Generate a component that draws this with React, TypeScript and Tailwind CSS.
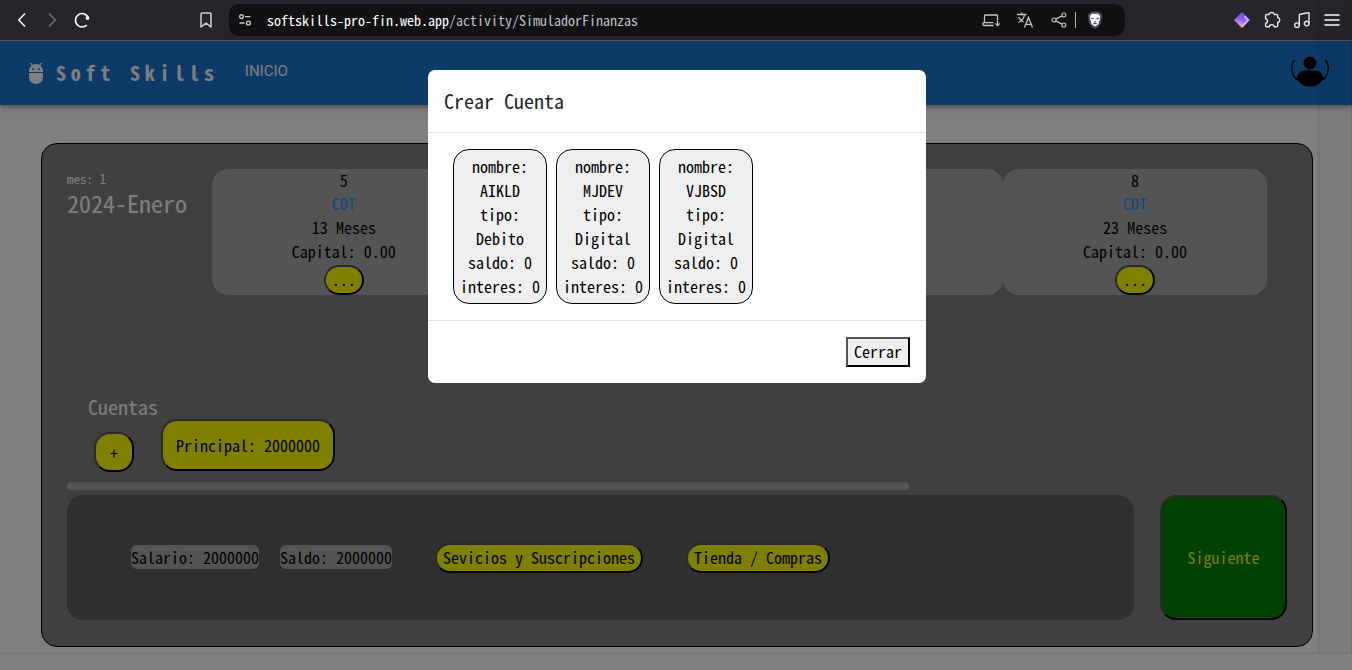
import { useState, type ReactNode } from "react";

const mono = "font-['Noto_Sans_Mono_CJK_SC','Liberation_Mono',monospace]";

function BrowserBar() {
  return (
    <header className="flex h-[41px] shrink-0 items-center border-b border-[#5a5a5c] bg-[#26262a] text-[#dcdce0]">
      <div className="flex w-[229px] items-center pl-3">
        <button type="button" aria-label="Atrás" className="w-[30px]">
          <svg width="20" height="20" viewBox="0 0 20 20" fill="none" stroke="#ffffff" strokeWidth="1.5">
            <path d="M13 3.500 6.800 10 13 16.500" />
          </svg>
        </button>
        <button type="button" aria-label="Adelante" className="w-[30px]">
          <svg width="20" height="20" viewBox="0 0 20 20" fill="none" stroke="#707074" strokeWidth="1.5">
            <path d="M7 3.500 13.200 10 7 16.500" />
          </svg>
        </button>
        <button type="button" aria-label="Recargar">
          <svg width="20" height="20" viewBox="0 0 20 20" fill="none" stroke="#ffffff" strokeWidth="1.600">
            <path d="M14.800 15.100A6.700 6.700 0 1 1 15.500 6.200" />
            <circle cx="15.500" cy="8" r="1.900" fill="#ffffff" stroke="none" />
          </svg>
        </button>
        <button type="button" aria-label="Marcador" className="mr-[13px] ml-auto">
          <svg width="20" height="20" viewBox="0 0 20 20" fill="none" stroke="#d0d0d4" strokeWidth="1.500" strokeLinejoin="round">
            <path d="M5 4.200Q5 3 6.200 3h7.600Q15 3 15 4.200V17l-5-3.800L5 17Z" />
          </svg>
        </button>
      </div>
      <div className="flex h-8 min-w-0 flex-[0_1_896px] items-center rounded-[10px] bg-[#111113] pr-5 pl-[9px]">
        <svg width="14" height="14" viewBox="0 0 14 14" fill="none" stroke="#c8c8cc" strokeWidth="1.400" aria-hidden="true">
          <circle cx="3.500" cy="3.600" r="1.900" />
          <path d="M7 3.600h5.500M1.500 10h5" />
          <circle cx="10.400" cy="10" r="1.900" />
        </svg>
        <p className={`ml-[15px] flex-1 truncate text-sm leading-5 text-[#b9c0c8] ${mono}`}>
          <span className="text-white">softskills-pro-fin.web.app</span>/activity/SimuladorFinanzas
        </p>
        <div className="flex items-center">
          <button type="button" aria-label="Instalar">
            <svg width="20" height="20" viewBox="0 0 20 20" fill="none" stroke="#c4c4c8" strokeWidth="1.300">
              <path d="M3.500 12.500V5.800Q3.500 5 4.300 5h11.400q.8 0 .8.800V10M2 12.700h10.500M2 12.700v1.800q0 1 1 1h9.500M16.500 10.500v5M14.300 13.400l2.200 2.200 2.200-2.200" />
            </svg>
          </button>
          <button type="button" aria-label="Traducir" className="ml-[14px]">
            <svg width="20" height="20" viewBox="0 0 20 20" fill="none" stroke="#c4c4c8" strokeWidth="1.300">
              <path d="M2 4.500h9.500M6.700 2.500v2M3.500 12.500c3.500-1.500 5.500-4.200 6-8M3.500 7c1 2.200 2.700 3.900 5 5M9.500 17.500l4-10 4 10M10.900 14.300h5.200" />
            </svg>
          </button>
          <button type="button" aria-label="Compartir" className="ml-[14px]">
            <svg width="20" height="20" viewBox="0 0 20 20" fill="none" stroke="#c4c4c8" strokeWidth="1.200">
              <circle cx="5" cy="10" r="2" />
              <circle cx="14.800" cy="5" r="2" />
              <circle cx="14.800" cy="15" r="2" />
              <path d="m6.800 9.100 6.200-3.200M6.800 10.900l6.200 3.200" />
            </svg>
          </button>
          <span className="ml-[6px] h-4 w-px bg-[#b0b0b4]" />
          <button type="button" aria-label="Brave Shields" className="ml-[9px]">
            <svg width="20" height="20" viewBox="0 0 20 20">
              <path d="M4.300 3 7 1.500h6L15.700 3l1.500 2.300-.5 2.500-.7 5.500L13 17l-3 2-3-2-3-3.700-.7-5.500-.5-2.500Z" fill="#4b4d62" />
              <path d="m6.500 4 1.700-.500 1.800.5 1.800-.500 1.700.5 1.700 2.300-.5 1.600.3 1.600-1 1.700-.3 2.500-2 1.500L10 16.500l-1.700-1.300-2-1.500-.3-2.500-1-1.700.3-1.600-.5-1.600Z" fill="#ffffff" />
              <path d="m6.300 7.500 2.500.8-.5 1.200-2-.800ZM13.700 7.500l-2.500.8.5 1.200 2-.800ZM9 11h2l-1 1.500ZM7.600 13.200l2.400-.7 2.400.7-2.400 1.300Z" fill="#4b4d62" />
            </svg>
          </button>
        </div>
      </div>
      <div className="ml-auto flex items-center pr-[10px]">
        <svg width="20" height="20" viewBox="0 0 20 20" aria-hidden="true">
          <defs>
            <linearGradient id="gem" x1="0.700" y1="0" x2="0.300" y2="1">
              <stop offset="0" stopColor="#6a48ff" />
              <stop offset="0.500" stopColor="#8e5cf0" />
              <stop offset="1" stopColor="#ffc9a8" />
            </linearGradient>
          </defs>
          <path d="M10 2.500 17.500 10 10 17.500 2.500 10Z" fill="url(#gem)" stroke="url(#gem)" strokeLinejoin="round" />
          <path d="m13 5.500 4.500 4.500-7 7.300-1-1.500 5.300-5.600-2.800-3Z" fill="#d9c4ff" opacity="0.800" />
        </svg>
        <button type="button" aria-label="Extensiones" className="ml-[10px]">
          <svg width="20" height="20" viewBox="0 0 20 20" fill="none" stroke="#e4e4e8" strokeWidth="1.400" strokeLinejoin="round">
            <path d="M4.600 4.500h2.600C7 3.200 8.200 2.500 9.600 2.500s2.700.7 2.500 2h2.600q1 0 1 1v2.300c1.300-.2 2 .9 2 2.200s-.7 2.500-2 2.300v3.500q0 1-1 1h-2.500c0-1.300-1.100-2-2.400-2s-2.500.7-2.500 2H4.600q-1 0-1-1v-2.500c1.200 0 1.900-1.100 1.900-2.200S4.800 8.900 3.600 8.900V5.500q0-1 1-1Z" />
          </svg>
        </button>
        <button type="button" aria-label="Multimedia" className="ml-[10px]">
          <svg width="20" height="20" viewBox="0 0 20 20" fill="none" stroke="#e4e4e8" strokeWidth="1.400" strokeLinejoin="round">
            <circle cx="5" cy="15.200" r="2.300" />
            <circle cx="14.700" cy="13.600" r="2.300" />
            <path d="M7.300 15.200V5.200q0-.8.8-1l8.100-1.500q.8-.1.800.7v10.200" />
          </svg>
        </button>
        <button type="button" aria-label="Menú" className="ml-[10px]">
          <svg width="20" height="20" viewBox="0 0 20 20" fill="none" stroke="#ffffff" strokeWidth="1.500">
            <path d="M2.500 5h15M2.500 10h15M2.500 15h15" />
          </svg>
        </button>
      </div>
    </header>
  );
}

function NavBar() {
  return (
    <nav className="flex h-16 shrink-0 items-center bg-[#1976d2] px-6 text-white shadow-[0_2px_4px_-1px_rgba(0,0,0,0.2),0_4px_5px_0_rgba(0,0,0,0.14),0_1px_10px_0_rgba(0,0,0,0.12)]">
      <svg width="24" height="24" viewBox="0 0 24 24" fill="#ffffff" aria-hidden="true">
        <path d="M5 16c0 3.900 3.100 7 7 7s7-3.100 7-7v-4H5v4ZM16.100 4.400l2.100-2.100-.8-.8-2.300 2.300C14.200 3.300 13.100 3.100 12 3.100s-2.200.2-3.100.7L6.600 1.500l-.8.8 2.100 2.100C6.200 5.700 5 7.700 5 10v1h14v-1c0-2.300-1.200-4.300-2.900-5.600ZM9 9a1 1 0 1 1 0-2 1 1 0 0 1 0 2Zm6 0a1 1 0 1 1 0-2 1 1 0 0 1 0 2Z" />
      </svg>
      <a href="#inicio" className={`ml-2 text-xl leading-8 font-bold tracking-[0.3rem] ${mono}`}>
        Soft Skills
      </a>
      <a href="#inicio" className="mb-1 ml-[26px] font-['Roboto',sans-serif] text-[15px] leading-6">
        INICIO
      </a>
      <button type="button" aria-label="Perfil" className="mr-[-1px] mb-1 ml-auto text-black">
        <svg width="38" height="38" viewBox="0 0 38 38" fill="currentColor">
          <circle cx="19" cy="11" r="6.500" />
          <path d="M5.500 26.500C6.500 21.500 9 18.500 13 18.500h12c4 0 6.500 3 7.500 8C29.500 32 25 34.500 19 34.500S8.500 32 5.500 26.500Z" />
          <path d="M3.700 8Q.8 11 .8 16.500 1 23.500 6 28M34.300 8q2.900 3 2.900 8.500Q37 23.500 32 28" fill="none" stroke="currentColor" strokeWidth="1.400" />
        </svg>
      </button>
    </nav>
  );
}

const outset = "border-2 border-black [border-style:outset]";

function PillButton({ children }: { children: ReactNode }) {
  return (
    <button type="button" className={`flex h-[30px] items-start rounded-2xl bg-[#ffff00] px-[6px] text-base leading-6 ${outset}`}>
      {children}
    </button>
  );
}

type Deposit = { id: number; months: number };

const deposits: (Deposit | null)[] = [{ id: 5, months: 13 }, null, null, { id: 8, months: 23 }];

function DepositTile({ deposit }: { deposit: Deposit | null }) {
  return (
    <li className="flex flex-1 flex-col items-center rounded-2xl bg-[#a9a9a9] text-base leading-6">
      {deposit && (
        <>
          <span className="leading-[22px]">{deposit.id}</span>
          <span className="text-[#1e90ff]">CDT</span>
          <span>{deposit.months} Meses</span>
          <span className="mb-[2px]">Capital: 0.00</span>
          <PillButton>...</PillButton>
        </>
      )}
    </li>
  );
}

function Simulator() {
  return (
    <main className={`mt-[38px] mr-[39px] mb-[23px] ml-[41px] flex-1 rounded-2xl border border-black bg-[#808080] px-[25px] pt-[25px] text-black ${mono}`}>
      <section className="flex h-[226px] items-start pr-5">
        <div className="w-[145px] shrink-0 text-white">
          <p className="text-[13px] leading-5">mes: 1</p>
          <h1 className="text-2xl leading-7">2024-Enero</h1>
        </div>
        <ul className="flex min-h-[126px] flex-1">
          {deposits.map((deposit, index) => (
            <DepositTile key={index} deposit={deposit} />
          ))}
        </ul>
      </section>
      <section className="h-[87px]">
        <h2 className="ml-[21px] text-xl leading-6 text-white">Cuentas</h2>
        <div className="ml-[27px] flex items-start gap-[27px]">
          <button type="button" aria-label="Crear cuenta" className={`mt-[13px] size-10 rounded-2xl bg-[#ffff00] text-base leading-6 ${outset}`}>
            +
          </button>
          <button type="button" className={`h-[52px] rounded-2xl bg-[#ffff00] px-[13px] text-base leading-6 ${outset}`}>
            Principal: 2000000
          </button>
        </div>
      </section>
      <div className="h-2 w-[69%] rounded-full bg-[#a9a9a9]" />
      <section className="mt-[5px] flex h-[125px] gap-[26px]">
        <div className="flex min-w-0 flex-1 items-center rounded-2xl bg-[#606060] pl-16 text-base leading-6">
          <div className="mb-[2px] flex gap-[21px]">
            <span className="rounded-[6px] bg-[#a9a9a9]">Salario: 2000000</span>
            <span className="rounded-[6px] bg-[#a9a9a9]">Saldo: 2000000</span>
          </div>
          <div className="ml-[43px] flex gap-[43px]">
            <PillButton>Sevicios y Suscripciones</PillButton>
            <PillButton>Tienda / Compras</PillButton>
          </div>
        </div>
        <button type="button" className={`w-[127px] rounded-2xl bg-[#008000] pb-[2px] text-base leading-6 text-[#ffff00] ${outset}`}>
          Siguiente
        </button>
      </section>
    </main>
  );
}

const accounts = [
  { name: "AIKLD", type: "Debito" },
  { name: "MJDEV", type: "Digital" },
  { name: "VJBSD", type: "Digital" },
];

function CreateAccountDialog({ onClose }: { onClose: () => void }) {
  return (
    <div className="absolute inset-0 flex items-start justify-center bg-black/50 pt-[29px] pl-[2px]">
      <div role="dialog" aria-labelledby="dialog-title" className={`w-[498px] rounded-[7px] bg-white text-black ${mono}`}>
        <h2 id="dialog-title" className="border-b border-[#dee2e6] px-4 pt-4 pb-4 text-xl leading-[30px] text-[#212529]">
          Crear Cuenta
        </h2>
        <div className="flex gap-[9px] px-[25px] py-4">
          {accounts.map((account) => (
            <button key={account.name} type="button" className="w-[94px] rounded-2xl border border-black bg-[#efefef] pt-1 pb-[5px] text-base leading-6">
              <span className="block">nombre:</span>
              <span className="block">{account.name}</span>
              <span className="block">tipo:</span>
              <span className="block">{account.type}</span>
              <span className="block">saldo: 0</span>
              <span className="block">interes: 0</span>
            </button>
          ))}
        </div>
        <div className="flex justify-end border-t border-[#dee2e6] p-4">
          <button type="button" onClick={onClose} className={`h-[30px] bg-[#efefef] px-[6px] pb-[2px] text-base leading-6 ${outset}`}>
            Cerrar
          </button>
        </div>
      </div>
    </div>
  );
}

function EdgeShading() {
  return (
    <div aria-hidden="true" className="pointer-events-none absolute inset-0 flex flex-col">
      <div className="flex flex-1 justify-end">
        <div className="w-1 bg-linear-to-r from-transparent to-black/10" />
        <div className="w-8 border-r border-black/10 bg-black/2" />
      </div>
      <div className="h-[17px] border-t border-black/8" />
    </div>
  );
}

export default function App() {
  const [open, setOpen] = useState(true);
  return (
    <div className="relative flex min-h-screen flex-col bg-white">
      <BrowserBar />
      <div className="relative flex flex-1 flex-col">
        <NavBar />
        <Simulator />
        {open && <CreateAccountDialog onClose={() => setOpen(false)} />}
      </div>
      <EdgeShading />
    </div>
  );
}
